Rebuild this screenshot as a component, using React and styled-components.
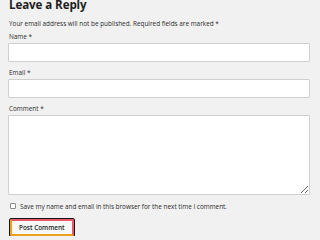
import React from 'react';
import styled, { createGlobalStyle } from 'styled-components';

const GlobalStyle = createGlobalStyle`
    * { box-sizing:border-box; }
    html, body {
        margin:0;
        padding:0;
        background-color:#f1f1f1;
        overflow:hidden;
    }
    body {
        font-family:"Open Sans", "Noto Sans", sans-serif;
        color:#222;
    }
`;

const Wrapper = styled.div`
    display:flex;
    flex-direction:column;
    padding:0 10px 0 8px;
`;

const Title = styled.h3`
    margin:-2px 0 0 0;
    font-size:11.6px;
    line-height:14px;
    font-weight:700;
    letter-spacing:-0.1px;
    color:#1e1e1e;
    padding-left:1px;
`;

const Notes = styled.p`
    margin:7px 0 3px 1px;
    font-size:6.4px;
    line-height:10px;
    color:#2b2b2b;
`;

const Field = styled.div`
    display:flex;
    flex-direction:column;
    margin-bottom:${p => p.$gap ?? 6}px;
`;

const Label = styled.label`
    display:block;
    font-size:6.4px;
    line-height:10px;
    margin:0 0 1px 1px;
    color:#2b2b2b;
`;

const Input = styled.input`
    width:100%;
    height:19px;
    border:1px solid #cfcfcf;
    border-radius:1px;
    background-color:#fff;
    margin:0;
    padding:2px 4px;
    font:inherit;
    outline:none;
`;

const TextArea = styled.textarea`
    width:100%;
    height:80px;
    border:1px solid #cfcfcf;
    border-radius:1px;
    background-color:#fff;
    margin:0;
    padding:2px 4px;
    font:inherit;
    outline:none;
    resize:vertical;
    display:block;
`;

const CheckRow = styled.div`
    display:flex;
    align-items:center;
    gap:4px;
    height:10px;
    margin:6px 0 8px 2px;
    font-size:6.4px;
    color:#2b2b2b;
`;

const Box = styled.input`
    appearance:none;
    width:6px;
    height:6px;
    margin:0;
    border:1px solid #8a8a8a;
    border-radius:1px;
    background-color:#fff;
    flex-shrink:0;
`;

const Submit = styled.button`
    align-self:flex-start;
    margin-left:2px;
    height:17px;
    padding:0 7px;
    font-family:"Open Sans", "Noto Sans", sans-serif;
    font-size:6.4px;
    font-weight:600;
    color:#222;
    background-color:#f7f7f7;
    border:2px solid;
    border-color:#e85866 #e85866 #eba21c #eba21c;
    outline:1.5px solid #141414;
    border-radius:1px;
    cursor:pointer;
`;

const App = () => {
    return <>
        <GlobalStyle />
        <Wrapper>
            <Title>Leave a Reply</Title>
            <Notes>Your email address will not be published. Required fields are marked *</Notes>
            <Field>
                <Label htmlFor="author">Name *</Label>
                <Input id="author" type="text" />
            </Field>
            <Field>
                <Label htmlFor="email">Email *</Label>
                <Input id="email" type="email" />
            </Field>
            <Field $gap={0}>
                <Label htmlFor="comment">Comment *</Label>
                <TextArea id="comment" />
            </Field>
            <CheckRow>
                <Box type="checkbox" id="consent" />
                <span>Save my name and email in this browser for the next time I comment.</span>
            </CheckRow>
            <Submit type="button">Post Comment</Submit>
        </Wrapper>
    </>
}

export default App;
